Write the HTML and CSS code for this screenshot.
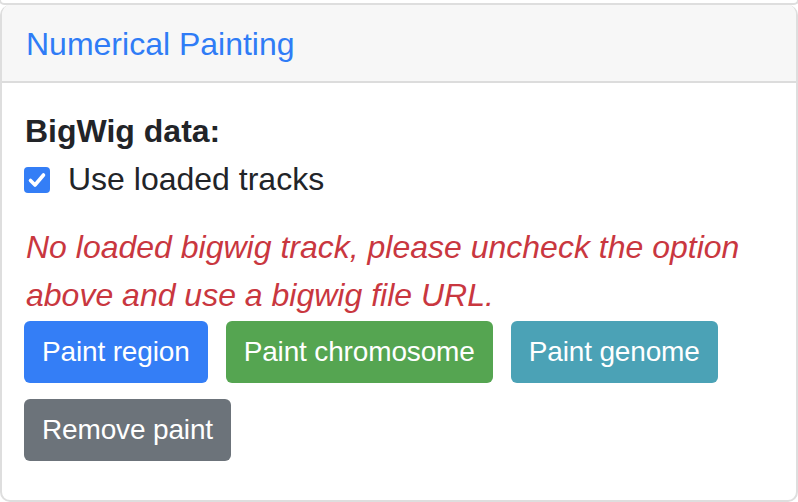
FILE: index.html
```html
<!DOCTYPE html>
<html>
<head>
<meta charset="utf-8">
<link rel="stylesheet" href="styles.css">
</head>
<body>
<div class="prev-card"></div>
<div class="card">
  <div class="card-header"><a class="header-link">Numerical Painting</a></div>
  <div class="card-body">
    <div class="label">BigWig data:</div>
    <div class="check-row">
      <span class="checkbox"><svg width="26" height="26" viewBox="0 0 26 26"><path d="M6.5 13.5 L11 18 L19.5 8" fill="none" stroke="#fff" stroke-width="3.6" stroke-linecap="round" stroke-linejoin="round"/></svg></span>
      <span class="check-label">Use loaded tracks</span>
    </div>
    <p class="error">No loaded bigwig track, please uncheck the option above and use a bigwig file URL.</p>
    <div class="buttons">
      <button class="btn btn-primary">Paint region</button>
      <button class="btn btn-success">Paint chromosome</button>
      <button class="btn btn-info">Paint genome</button>
      <button class="btn btn-secondary">Remove paint</button>
    </div>
  </div>
</div>
</body>
</html>
```
FILE: styles.css
```css
html, body {
  margin: 0;
  padding: 0;
  background: #ffffff;
}
body {
  width: 798px;
  height: 502px;
  overflow: hidden;
  font-family: "Liberation Sans", Arial, Helvetica, sans-serif;
  color: #222428;
}
.prev-card {
  height: 3px;
  border: 2px solid #dedede;
  border-top: 0;
  border-radius: 0 0 10px 10px;
  margin: 0 -1px 0 -1px;
}
.card {
  box-sizing: border-box;
  width: 798px;
  height: 497px;
  border: 2px solid #dedede;
  border-top: 0;
  border-radius: 10px;
  overflow: hidden;
}
.card-header {
  background: #f7f7f7;
  border-bottom: 2px solid #dcdcdc;
  padding: 15px 22px 13px 24px;
  font-size: 32px;
  line-height: 48px;
}
.header-link {
  color: #2f7cf6;
  text-decoration: none;
}
.card-body {
  padding: 24px 22px 0 22px;
}
.label {
  font-weight: bold;
  font-size: 32px;
  line-height: 48px;
  padding-left: 1px;
}
.check-row {
  display: flex;
  align-items: center;
  height: 48px;
}
.checkbox {
  width: 26px;
  height: 26px;
  border-radius: 4px;
  background: #347ef6;
  display: inline-flex;
  margin-top: 2px;
}
.check-label {
  font-size: 32px;
  line-height: 48px;
  margin-left: 18px;
}
.error {
  margin: 20px 0 0 2px;
  color: #c9373f;
  font-style: italic;
  font-size: 32px;
  line-height: 48px;
  width: 730px;
}
.buttons {
  display: flex;
  flex-wrap: wrap;
  gap: 16px 18px;
  margin-top: 2px;
}
.btn {
  font-family: "Liberation Sans", Arial, Helvetica, sans-serif;
  font-size: 28px;
  line-height: 58px;
  height: 62px;
  padding: 0 16px;
  border: 2px solid transparent;
  border-radius: 6px;
  color: #ffffff;
  margin: 0;
  letter-spacing: -0.15px;
}
.btn-primary { background: #347ef6; }
.btn-success { background: #55a551; }
.btn-info { background: #4ba2b6; }
.btn-secondary { background: #6c737a; }
```
